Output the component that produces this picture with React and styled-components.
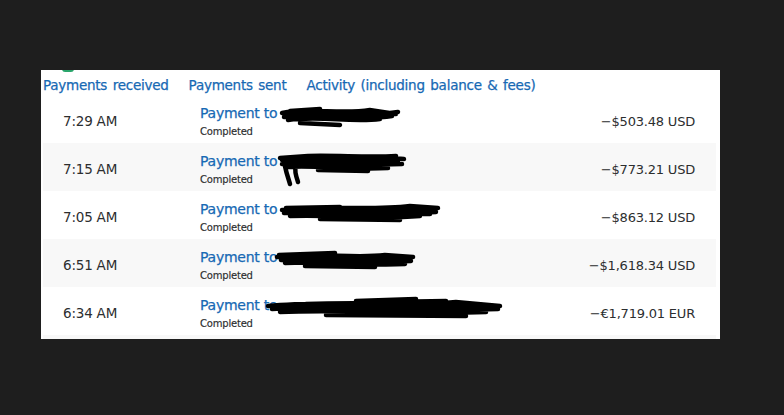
import styled, { createGlobalStyle } from "styled-components";

const Global = createGlobalStyle`
  html, body {
    margin: 0;
    padding: 0;
    background: #1e1e1e;
    width: 784px;
    height: 415px;
    overflow: hidden;
  }
  body {
    font-family: "DejaVu Sans", Verdana, sans-serif;
  }
`;

const Page = styled.div`
  padding: 70px 64px 0 41px;
`;

const Panel = styled.div`
  position: relative;
  width: 679px;
  height: 269px;
  background: #fff;
  overflow: hidden;
  &::before {
    content: "";
    position: absolute;
    left: 21px;
    top: -1px;
    width: 12px;
    height: 3px;
    border-radius: 0 0 6px 6px;
    background: #2aa56b;
  }
`;

const Tabs = styled.div`
  display: flex;
  gap: 20px;
  padding: 6px 0 0 2px;
  height: 19px;
`;

const Tab = styled.span`
  color: #1769b4;
  font-size: 13.5px;
  letter-spacing: -0.25px;
  word-spacing: 1.5px;
  line-height: 18px;
  -webkit-text-stroke: 0.25px #1769b4;
`;

const List = styled.div`
  display: flex;
  flex-direction: column;
  margin: 0 4px 0 2px;
`;

const Row = styled.div`
  display: grid;
  grid-template-columns: 137px 1fr auto;
  align-items: center;
  height: 48px;
  padding: 0 21px 0 20px;
  background: ${(p) => (p.$shade ? "#f8f8f8" : "#fff")};
`;

const Time = styled.span`
  color: #2c2e2f;
  font-size: 13.5px;
  letter-spacing: -0.2px;
  padding-top: 4px;
`;

const Desc = styled.div`
  position: relative;
  display: flex;
  flex-direction: column;
  gap: 3px;
  padding-top: 5px;
`;

const Title = styled.span`
  color: #1769b4;
  font-size: 14px;
  letter-spacing: -0.25px;
  line-height: 17px;
  -webkit-text-stroke: 0.25px #1769b4;
`;

const Status = styled.span`
  color: #2c2e2f;
  font-size: 10px;
  letter-spacing: -0.2px;
  line-height: 13px;
  -webkit-text-stroke: 0.15px #2c2e2f;
`;

const Amount = styled.span`
  color: #2c2e2f;
  font-size: 13px;
  letter-spacing: -0.2px;
  padding-top: 4px;
`;

const Scribble = styled.svg`
  position: absolute;
  overflow: visible;
`;

const scribbles = [
  { x: 80, y: 5, w: 120, h: 22, d: "M2 8 C30 2 60 10 90 5 L116 9 M4 12 C40 8 80 16 112 11 M8 15 C40 10 70 18 100 14 M20 18 L60 20 M10 6 L40 4 M30 9 C60 6 90 12 118 7 M6 10 L110 10" },
  { x: 78, y: 4, w: 128, h: 34, d: "M4 8 C30 2 70 10 100 5 L126 7 M4 12 C40 9 80 14 124 12 M8 15 C40 13 70 18 110 16 M6 10 C8 20 10 26 12 32 M18 10 C16 18 18 24 20 30 M2 6 L30 4 M40 18 L90 19 M10 10 L120 9 M30 4 C60 3 90 6 118 4" },
  { x: 80, y: 6, w: 160, h: 20, d: "M2 8 C40 3 90 9 130 4 L158 6 M4 11 C50 8 100 14 156 10 M10 14 C50 12 90 18 140 14 M40 17 L120 18 M6 6 L60 5 M20 9 L150 8 M60 12 L150 12" },
  { x: 75, y: 5, w: 140, h: 20, d: "M2 8 C40 3 80 10 110 6 L138 8 M6 11 C50 8 90 14 136 12 M10 14 C50 12 90 17 130 15 M30 17 L100 18 M4 6 L60 4 M20 9 L130 10" },
  { x: 66, y: 4, w: 236, h: 22, d: "M2 10 C60 4 130 12 190 6 L234 10 M6 13 C70 9 150 16 232 13 M14 16 C80 13 150 19 220 16 M60 19 L200 20 M90 5 L150 3 M120 6 L180 5 M20 11 L228 11 M40 8 C100 6 160 9 210 8" },
];

const rows = [
  { time: "7:29 AM", amount: "−$503.48 USD" },
  { time: "7:15 AM", amount: "−$773.21 USD" },
  { time: "7:05 AM", amount: "−$863.12 USD" },
  { time: "6:51 AM", amount: "−$1,618.34 USD" },
  { time: "6:34 AM", amount: "−€1,719.01 EUR" },
];

export default function App() {
  return (
    <>
      <Global />
      <Page>
        <Panel>
          <Tabs>
            <Tab>Payments received</Tab>
            <Tab>Payments sent</Tab>
            <Tab>Activity (including balance &amp; fees)</Tab>
          </Tabs>
          <List>
            {rows.map((r, i) => {
              const s = scribbles[i];
              return (
                <Row key={i} $shade={i % 2 === 1}>
                  <Time>{r.time}</Time>
                  <Desc>
                    <Title>Payment to</Title>
                    <Status>Completed</Status>
                    <Scribble
                      style={{ left: s.x, top: s.y }}
                      width={s.w}
                      height={s.h}
                      viewBox={`0 0 ${s.w} ${s.h}`}
                    >
                      <path d={s.d} fill="none" stroke="#000" strokeWidth="4.5" strokeLinecap="round" />
                    </Scribble>
                  </Desc>
                  <Amount>{r.amount}</Amount>
                </Row>
              );
            })}
            <Row $shade />
          </List>
        </Panel>
      </Page>
    </>
  );
}
